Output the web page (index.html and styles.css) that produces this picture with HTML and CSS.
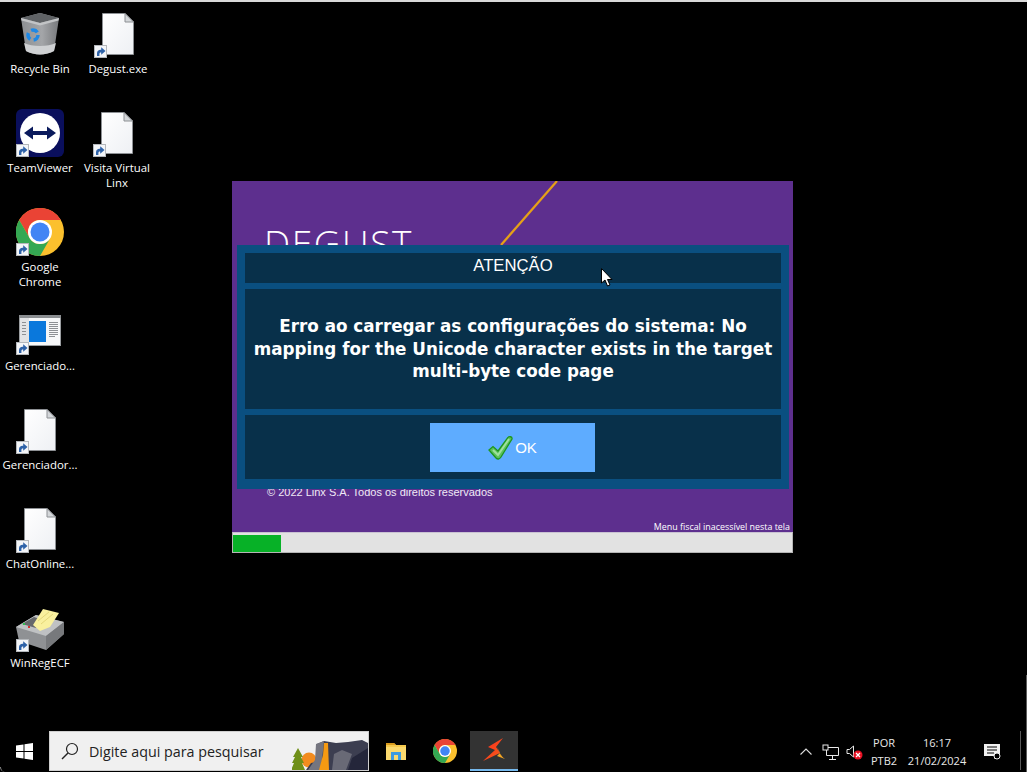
FILE: index.html
```html
<!DOCTYPE html>
<html lang="pt">
<head>
<meta charset="utf-8">
<title>Degust</title>
<link rel="stylesheet" href="styles.css">
</head>
<body>
<svg class="defs" width="0" height="0" aria-hidden="true">
  <defs>
    <linearGradient id="binGrad" x1="0" x2="1" y1="0" y2="0">
      <stop offset="0" stop-color="#8c8f92"/><stop offset=".55" stop-color="#a4a6a9"/><stop offset="1" stop-color="#77797c"/>
    </linearGradient>
    <linearGradient id="fileGrad" x1="0" x2="1" y1="0" y2="1">
      <stop offset="0" stop-color="#ffffff"/><stop offset="1" stop-color="#eef0f4"/>
    </linearGradient>
    <linearGradient id="linxGrad" x1="0" x2="1" y1="0" y2="1">
      <stop offset="0" stop-color="#ff2a1e"/><stop offset="1" stop-color="#f2611a"/>
    </linearGradient>
    <symbol id="shortcut" viewBox="0 0 13 13">
      <rect x=".5" y=".5" width="12" height="12" fill="#f3f5f8" stroke="#b4b7bb"/>
      <path d="M3 11V8.200C3 6.100 4.500 4.700 6.600 4.700H7.200V2.200L11.500 6 7.200 9.800V7.500H6.800C5.800 7.500 5.400 8.100 5.400 9V11Z" fill="#2e62a8"/>
    </symbol>
    <symbol id="file" viewBox="0 0 32 42">
      <path d="M.5.500H23L31.500 9V41.500H.5Z" fill="url(#fileGrad)" stroke="#8d9094"/>
      <path d="M23 .5V9H31.500Z" fill="#d4d7da" stroke="#8d9094"/>
    </symbol>
    <symbol id="chrome" viewBox="0 0 48 48">
      <circle cx="24" cy="24" r="24" fill="#fbc02d"/>
      <path d="M24 12H44.800A24 24 0 0 0 3.200 12L13.600 30A12 12 0 0 1 24 12Z" fill="#ea4335"/>
      <path d="M3.200 12 13.600 30A12 12 0 0 0 34.400 30L24 48A24 24 0 0 1 3.200 12Z" fill="#34a853"/>
      <circle cx="24" cy="24" r="12" fill="#fff"/>
      <circle cx="24" cy="24" r="9.500" fill="#4285f4"/>
    </symbol>
  </defs>
</svg>

<div class="desktop">
  <div class="top-edge"></div>
  <div class="edge-right"></div>
  <div class="corner-left"></div>

  <div class="icon icon-recycle">
    <div class="glyph">
      <svg class="art" width="48" height="48" viewBox="0 0 48 48">
        <path d="M5 8 24 3 43 8 38 41C30 45.500 18 45.500 10 41Z" fill="url(#binGrad)"/>
        <path d="M8 33C16 37 32 37 40 33L38 41C30 45.500 18 45.500 10 41Z" fill="#cfd1d3"/>
        <path d="M5 8 24 3 43 8 24 13Z" fill="#5f6265"/>
        <path d="M5 8 24 13 43 8 42.500 10.500 24 15.500 5.500 10.500Z" fill="#c2c4c6"/>
        <circle cx="17" cy="25" r="5" fill="none" stroke="#1e88e5" stroke-width="3.500" stroke-dasharray="7 3.500"/>
      </svg>
    </div>
    <div class="label">Recycle Bin</div>
  </div>

  <div class="icon icon-degust">
    <div class="glyph">
      <svg class="art file" width="32" height="42"><use href="#file"/></svg>
      <svg class="badge" width="13" height="13"><use href="#shortcut"/></svg>
    </div>
    <div class="label">Degust.exe</div>
  </div>

  <div class="icon icon-tv">
    <div class="glyph">
      <svg class="art" width="48" height="48" viewBox="0 0 48 48">
        <rect width="48" height="48" rx="6" fill="#0a0f5c"/>
        <circle cx="24" cy="24" r="20" fill="#fff"/>
        <path d="M8 24 17 17.500V22H31V17.500L40 24 31 30.500V26H17V30.500Z" fill="#0a1a5c"/>
      </svg>
      <svg class="badge" width="13" height="13"><use href="#shortcut"/></svg>
    </div>
    <div class="label">TeamViewer</div>
  </div>

  <div class="icon icon-visita">
    <div class="glyph">
      <svg class="art file" width="32" height="42"><use href="#file"/></svg>
      <svg class="badge" width="13" height="13"><use href="#shortcut"/></svg>
    </div>
    <div class="label">Visita Virtual<br>Linx</div>
  </div>

  <div class="icon icon-chrome">
    <div class="glyph">
      <svg class="art" width="48" height="48"><use href="#chrome"/></svg>
      <svg class="badge" width="13" height="13"><use href="#shortcut"/></svg>
    </div>
    <div class="label">Google<br>Chrome</div>
  </div>

  <div class="icon icon-ger1">
    <div class="glyph">
      <svg class="art" width="48" height="48" viewBox="0 0 48 48">
        <rect x="3.500" y="8.500" width="41" height="30" fill="#f6f7f8" stroke="#9a9da0"/>
        <rect x="3" y="8" width="42" height="3" fill="#8b8e91"/>
        <rect x="4" y="11" width="9" height="27" fill="#e2e3e5"/>
        <rect x="13" y="14" width="17" height="21" fill="#0a78dc"/>
        <path d="M33 15.500H42M33 17.500H42M33 19.500H42M33 21.500H42M33 23.500H42M33 25.500H42M33 27.500H42M33 29.500H39M6 15.500H10M6 18.500H10M6 21.500H10M6 24.500H10M6 27.500H10" stroke="#8d9094"/>
      </svg>
      <svg class="badge" width="13" height="13"><use href="#shortcut"/></svg>
    </div>
    <div class="label">Gerenciado...</div>
  </div>

  <div class="icon icon-ger2">
    <div class="glyph">
      <svg class="art file" width="32" height="42"><use href="#file"/></svg>
      <svg class="badge" width="13" height="13"><use href="#shortcut"/></svg>
    </div>
    <div class="label">Gerenciador...</div>
  </div>

  <div class="icon icon-chat">
    <div class="glyph">
      <svg class="art file" width="32" height="42"><use href="#file"/></svg>
      <svg class="badge" width="13" height="13"><use href="#shortcut"/></svg>
    </div>
    <div class="label">ChatOnline...</div>
  </div>

  <div class="icon icon-winreg">
    <div class="glyph">
      <svg class="art" width="48" height="48" viewBox="0 0 48 48">
        <path d="M0 23 20 11 48 18V30L30 46 3 37Z" fill="#8f9194"/>
        <path d="M0 23 30 32 48 18 20 11Z" fill="#bfc1c3"/>
        <path d="M30 32 48 18V30L30 46Z" fill="#77797c"/>
        <path d="M6 20 18 13 30 17 20 24Z" fill="#66686b"/>
        <path d="M17 21 27 5 43 9 34 23 24 27Z" fill="#f9f09e"/>
        <path d="M22 17 33 8M25 20 37 10" stroke="#e4d77a"/>
        <rect x="7" y="19" width="2" height="2" fill="#2fbf4f"/>
        <rect x="12" y="22" width="2" height="2" fill="#d93030"/>
      </svg>
      <svg class="badge" width="13" height="13"><use href="#shortcut"/></svg>
    </div>
    <div class="label">WinRegECF</div>
  </div>

  <section class="app-window">
    <div class="splash">
      <svg class="swoosh" width="60" height="70" viewBox="0 0 60 70"><path d="M57 0 1 64" stroke="#e6a117" stroke-width="2.200" fill="none"/></svg>
      <div class="brand">DEGUST</div>
      <div class="copyright">© 2022 Linx S.A. Todos os direitos reservados</div>
      <div class="fiscal">Menu fiscal inacessível nesta tela</div>
      <div class="dialog">
        <div class="panel panel-title">ATENÇÃO</div>
        <div class="panel panel-message">Erro ao carregar as configurações do sistema: No mapping for the Unicode character exists in the target multi-byte code page</div>
        <div class="panel panel-actions">
          <button class="ok-button" type="button">
            <svg width="25" height="25" viewBox="0 0 25 25"><path d="M1 15 5 11.500 10 16 20 2.500C21 1 24.500 1.500 24 4L13 22C11.500 24.500 9.500 24.500 8 23Z" fill="#5cc15c" stroke="#1e961e" stroke-width="1.300"/><path d="M5 15 10 20 21 4" fill="none" stroke="#9fe09f" stroke-width="2"/></svg>
            <span>OK</span>
          </button>
        </div>
      </div>
    </div>
    <div class="progress"><div class="progress-fill"></div></div>
  </section>

  <svg class="cursor" width="12" height="19" viewBox="0 0 12 19"><path d="M.5.500V15L4 12 6.500 18 9 17 6.500 11.500H11Z" fill="#fff" stroke="#000"/></svg>

  <footer class="taskbar">
    <div class="start">
      <svg width="17" height="17" viewBox="0 0 17 17"><path d="M0 2.500 7.500 1.400V8H0ZM8.500 1.300 17 0V8H8.500ZM0 9H7.500V15.600L0 14.500ZM8.500 9H17V17L8.500 15.700Z" fill="#fff"/></svg>
    </div>
    <div class="search">
      <svg class="search-icon" width="18" height="18" viewBox="0 0 18 18"><circle cx="11" cy="7" r="5.500" fill="none" stroke="#222" stroke-width="1.200"/><path d="M7 11 1 17" stroke="#222" stroke-width="1.400"/></svg>
      <span class="search-text">Digite aqui para pesquisar</span>
      <svg class="search-art" width="76" height="40" viewBox="0 0 76 40">
        <circle cx="17" cy="30" r="7.500" fill="#f28c1e"/>
        <path d="M6 18 11 27H9L12 33H10L13 40H-1L2 33H0L3 27H1Z" fill="#6f8f18"/>
        <path d="M14 40 19 33 24 32 25 14 32 11 44 13 56 12 70 10 76 13V40Z" fill="#3c3e50"/>
        <path d="M24 14 32 11 29 40H16L23 30Z" fill="#74757f"/>
        <path d="M32 13 36 13 37 40H27L31 25Z" fill="#f59a12"/>
        <path d="M42 24 50 20 60 24 54 40H40Z" fill="#696a76"/>
        <path d="M60 28 76 18V40H56Z" fill="#24263a"/>
      </svg>
    </div>
    <div class="task-apps">
      <div class="task-app">
        <svg width="22" height="20" viewBox="0 0 22 20"><path d="M1 2H9L11 4H21V19H1Z" fill="#f5c84c"/><path d="M1 2H9L11 4H1Z" fill="#d99a1c"/><path d="M1 6H21V19H1Z" fill="#fbd96e"/><path d="M6 11H16V19H13V14H9V19H6Z" fill="#3d9ae0"/></svg>
      </div>
      <div class="task-app">
        <svg width="24" height="24"><use href="#chrome"/></svg>
      </div>
      <div class="task-app task-active">
        <svg width="23" height="24" viewBox="0 0 23 24"><path d="M14 9C16 15 19 19 22 21L14 18 17 15Z" fill="#f5a623"/><path d="M20 0 5 9 12 12 0 23 17 15 13 9Z" fill="url(#linxGrad)"/></svg>
      </div>
    </div>
    <div class="tray">
      <svg class="tray-chevron" width="12" height="7" viewBox="0 0 12 7"><path d="M.5 6.500 6 1 11.500 6.500" fill="none" stroke="#ddd" stroke-width="1.100"/></svg>
      <svg class="tray-net" width="17" height="16" viewBox="0 0 17 16"><path d="M4.500 3.500H16.500V11.500H4.500ZM10.500 11.500V15M7 15.500H14" fill="none" stroke="#e8e8e8"/><rect x="1" y="1" width="5" height="5" fill="#000" stroke="#e8e8e8"/></svg>
      <svg class="tray-sound" width="17" height="16" viewBox="0 0 17 16"><path d="M1 5.500H3.500L7.500 2V13L3.500 9.500H1Z" fill="none" stroke="#e8e8e8"/><circle cx="12" cy="11" r="4.500" fill="#e81123"/><path d="M10 9 14 13M14 9 10 13" stroke="#fff" stroke-width="1.200"/></svg>
      <div class="tray-lang"><span>POR</span><span>PTB2</span></div>
      <div class="tray-clock"><span>16:17</span><span>21/02/2024</span></div>
      <svg class="tray-notify" width="17" height="16" viewBox="0 0 17 16"><path d="M0 0H16V12H13L10 15V12H0Z" fill="#f2f2f2"/><path d="M3 3H13M3 6H13M3 9H10" stroke="#000"/><circle cx="13" cy="12" r="3" fill="#000" stroke="#f2f2f2"/></svg>
      <div class="show-desktop"></div>
    </div>
  </footer>
</div>
</body>
</html>
```

FILE: styles.css
```css
* { box-sizing: border-box; }
html, body { margin: 0; height: 100%; overflow: hidden; background: #000; }
.defs { position: absolute; }
.desktop {
  position: relative;
  width: 1027px;
  height: 772px;
  background: #000;
  font-family: "Open Sans", "Noto Sans", sans-serif;
  overflow: hidden;
}
.top-edge { height: 2px; background: #d9d9d9; }
.edge-right { position: absolute; right: 0; top: 675px; width: 1px; height: 97px; background: #5c5c5c; z-index: 2; }
.corner-left { position: absolute; left: 0; bottom: 0; width: 5px; height: 5px; border-left: 1px solid #8a8a8a; border-bottom-left-radius: 5px; z-index: 2; }

/* Desktop icons sit on a free canvas */
.icon { position: absolute; width: 76px; display: flex; flex-direction: column; align-items: center; color: #fff; }
.icon-recycle { left: 2px; top: 10px; }
.icon-degust { left: 80px; top: 10px; }
.icon-tv { left: 2px; top: 109px; }
.icon-visita { left: 79px; top: 109px; }
.icon-chrome { left: 2px; top: 208px; }
.icon-ger1 { left: 2px; top: 307px; }
.icon-ger2 { left: 2px; top: 406px; }
.icon-chat { left: 2px; top: 505px; }
.icon-winreg { left: 2px; top: 604px; }
.glyph { position: relative; width: 48px; height: 48px; display: flex; align-items: center; justify-content: center; }
.art { display: block; }
.badge { position: absolute; left: 0; bottom: 0; }
.label {
  margin-top: 3px;
  font-size: 11.400px;
  line-height: 15px;
  text-align: center;
  white-space: nowrap;
}

/* Application window */
.app-window { position: absolute; left: 232px; top: 181px; width: 561px; height: 372px; display: flex; flex-direction: column; }
.splash { position: relative; flex: 1; background: #5d2f8e; overflow: hidden; }
.swoosh { position: absolute; left: 268px; top: 0; }
.brand { position: absolute; left: 32px; top: 40px; font-family: "Open Sans", sans-serif; font-weight: 300; font-size: 37px; letter-spacing: 1.600px; line-height: 44px; color: #fff; }
.copyright { position: absolute; left: 35px; top: 304px; font-family: "Liberation Sans", sans-serif; font-size: 11px; line-height: 14px; color: #f0eaf6; }
.fiscal { position: absolute; right: 3px; top: 341px; font-family: "Open Sans", sans-serif; font-size: 8.900px; line-height: 10px; color: #fff; }
.dialog {
  position: absolute;
  left: 5px;
  top: 64px;
  width: 552px;
  height: 244px;
  padding: 8px 8px 10px;
  display: flex;
  flex-direction: column;
  gap: 6px;
  background: #0a4f80;
}
.panel { background: #08304a; color: #fff; display: flex; align-items: center; justify-content: center; }
.panel-title { height: 30px; padding-bottom: 4px; font-family: "Liberation Sans", sans-serif; font-size: 16.700px; }
.panel-message { height: 120px; padding: 0 4px; text-align: center; font-family: "DejaVu Sans", sans-serif; font-weight: 700; font-size: 16.800px; line-height: 22.500px; }
.panel-actions { height: 64px; padding-right: 1px; }
.ok-button {
  width: 165px;
  height: 49px;
  padding: 0;
  border: 0;
  background: #5eacff;
  color: #fff;
  display: flex;
  align-items: center;
  justify-content: center;
  gap: 2px;
  font-family: "Liberation Sans", sans-serif;
  font-size: 15px;
}
.progress { flex: none; height: 21px; padding-top: 2px; background: #e2e2e2; border-top: 1px solid #c9c2d2; border-bottom: 1px solid #b5b5b5; border-left: 1px solid #b5b5b5; border-right: 1px solid #b5b5b5; }
.progress-fill { width: 48px; height: 100%; background: #07b127; }
.cursor { position: absolute; left: 601px; top: 268px; }

/* Taskbar */
.taskbar { position: absolute; left: 0; right: 0; bottom: 0; height: 41px; display: flex; background: #000; color: #eee; }
.start { width: 49px; display: flex; align-items: center; justify-content: center; padding-bottom: 1px; }
.search { position: relative; width: 320px; height: 40px; background: #f0f0f0; border: 1px solid #cfcfcf; display: flex; align-items: center; overflow: hidden; }
.search-icon { margin-left: 11px; }
.search-text { margin-left: 10px; font-family: "Open Sans", sans-serif; font-size: 14.300px; color: #222; }
.search-art { position: absolute; right: 0; bottom: 0; }
.task-apps { display: flex; gap: 1px; margin-left: 3px; }
.task-app { width: 48px; height: 40px; display: flex; align-items: center; justify-content: center; }
.task-active { background: #333; border-bottom: 2px solid #76b9ed; }
.tray { flex: 1; display: flex; align-items: center; position: relative; font-family: "Open Sans", sans-serif; font-size: 11px; line-height: 18px; color: #e8e8e8; }
.tray-chevron { margin-left: 282px; }
.tray-net { margin-left: 10px; }
.tray-sound { margin-left: 7px; }
.tray-lang { margin-left: 6px; width: 30px; display: flex; flex-direction: column; align-items: center; }
.tray-clock { margin-left: 7px; width: 62px; display: flex; flex-direction: column; align-items: center; }
.tray-notify { margin-left: 16px; }
.show-desktop { position: absolute; right: 6px; top: 0; width: 1px; height: 39px; background: #5a5a5a; }
```
